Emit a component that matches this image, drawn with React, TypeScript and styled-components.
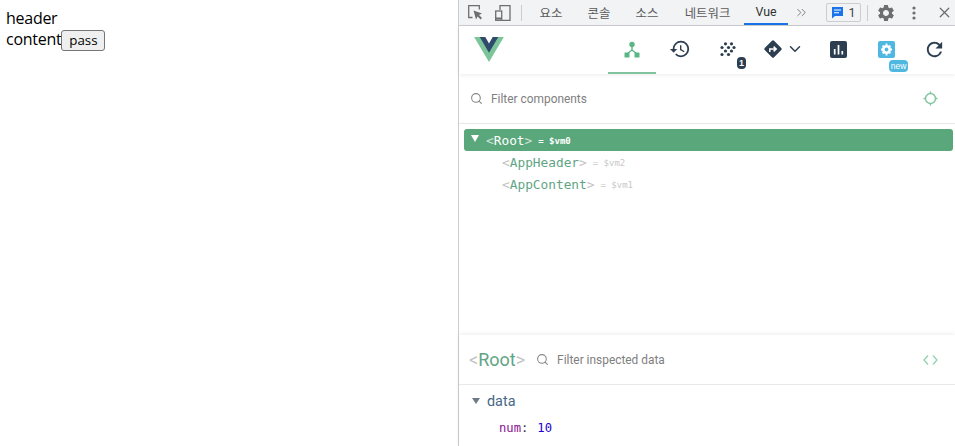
import styled, { createGlobalStyle } from "styled-components";
import { Search, ChevronDown, ChevronsRight, X } from "lucide-react";
import { MdHistory, MdRefresh, MdSettings } from "react-icons/md";

const GlobalStyle = createGlobalStyle`
  html, body {
    margin: 0;
    padding: 0;
    height: 100%;
    overflow: hidden;
    background: #fff;
  }
  #root { height: 100%; }
`;

const Page = styled.div`
  display: flex;
  width: 955px;
  height: 446px;
  font-family: "Liberation Sans", Arial, sans-serif;
`;

const Preview = styled.div`
  width: 458px;
  flex: none;
  padding: 8px 6px 0;
  box-sizing: border-box;
  font-family: "Open Sans", "Liberation Sans", sans-serif;
  font-size: 16px;
  letter-spacing: -0.27px;
  line-height: 21px;
  color: #000;
`;

const PassButton = styled.button`
  font-family: "Open Sans", "Liberation Sans", Arial, sans-serif;
  font-size: 13.33px;
  letter-spacing: 0;
  height: 21px;
  width: 44px;
  padding: 0;
  color: #000;
  background: #efefef;
  border: 1px solid #767676;
  border-radius: 3px;
  vertical-align: baseline;
`;

const Devtools = styled.div`
  flex: 1;
  display: flex;
  flex-direction: column;
  border-left: 1px solid #cbcdd1;
  min-width: 0;
`;

const TabBar = styled.div`
  height: 26px;
  flex: none;
  box-sizing: border-box;
  display: flex;
  align-items: center;
  background: #f1f3f4;
  border-bottom: 1px solid #cbcdd1;
  color: #5a5a5a;
`;

const BarIcon = styled.span<{ $w: number; $ml?: number }>`
  width: ${(p) => p.$w}px;
  margin-left: ${(p) => p.$ml ?? 0}px;
  flex: none;
  display: flex;
  align-items: center;
  justify-content: center;
  color: #6e6e6e;
`;

const Divider = styled.span<{ $ml: number; $mr: number }>`
  width: 1px;
  height: 16px;
  flex: none;
  background: #cbcdd1;
  margin: 0 ${(p) => p.$mr}px 0 ${(p) => p.$ml}px;
`;

const Tab = styled.span<{ $w: number; $active?: boolean }>`
  width: ${(p) => p.$w}px;
  height: 25px;
  flex: none;
  box-sizing: border-box;
  display: flex;
  align-items: center;
  justify-content: center;
  font-family: Roboto, "Noto Sans CJK KR", sans-serif;
  font-size: 12.4px;
  color: ${(p) => (p.$active ? "#333" : "#5a5a5a")};
  border-bottom: ${(p) => (p.$active ? "2px solid #1a73e8" : "none")};
`;

const IssueBadge = styled.span`
  width: 35px;
  height: 19px;
  margin-left: 12px;
  flex: none;
  box-sizing: border-box;
  display: flex;
  align-items: center;
  justify-content: center;
  gap: 4px;
  border: 1px solid #cbcdd1;
  border-radius: 2px;
  font-family: Roboto, sans-serif;
  font-size: 12.5px;
  color: #444;
`;

const Toolbar = styled.div`
  height: 48px;
  flex: none;
  display: flex;
  align-items: center;
  padding-left: 149px;
  box-shadow: 0 1px 4px rgba(0, 0, 0, 0.08);
  position: relative;
`;

const VueMark = styled.svg`
  position: absolute;
  left: 15px;
  top: 10px;
`;

const ToolButton = styled.span<{ $w: number; $active?: boolean }>`
  width: ${(p) => p.$w}px;
  height: 48px;
  flex: none;
  box-sizing: border-box;
  display: flex;
  align-items: center;
  justify-content: center;
  gap: 3px;
  color: #2c3e50;
  position: relative;
  border-bottom: 2px solid ${(p) => (p.$active ? "#7fc49f" : "transparent")};
`;

const CountBadge = styled.span`
  position: absolute;
  left: 33px;
  top: 31px;
  width: 9px;
  height: 12px;
  border-radius: 4px;
  background: #2c3e50;
  color: #fff;
  font-size: 9px;
  font-weight: 700;
  line-height: 12px;
  text-align: center;
`;

const NewBadge = styled.span`
  position: absolute;
  left: 27px;
  top: 34px;
  width: 19px;
  height: 12px;
  border-radius: 4px;
  background: #4fb8e0;
  color: #fff;
  font-size: 8.5px;
  line-height: 13px;
  text-align: center;
`;

const FilterRow = styled.div`
  height: 50px;
  flex: none;
  box-sizing: border-box;
  display: flex;
  align-items: center;
  padding: 0 17px 0 11px;
  gap: 8px;
  border-bottom: 1px solid #e8e8e8;
`;

const FilterText = styled.span<{ $ml?: number }>`
  font-family: Roboto, "Liberation Sans", sans-serif;
  font-size: 11.9px;
  color: #808080;
  flex: 1;
  margin-left: ${(p) => p.$ml ?? 0}px;
`;

const Tree = styled.div`
  flex: 1;
  padding: 5px 2px 0 5px;
  font-family: "DejaVu Sans Mono", "Liberation Mono", monospace;
`;

const TreeRow = styled.div<{ $selected?: boolean }>`
  height: 22px;
  display: flex;
  align-items: center;
  box-sizing: border-box;
  padding-left: ${(p) => (p.$selected ? 7 : 38)}px;
  border-radius: 3px;
  background: ${(p) => (p.$selected ? "#5ba77c" : "transparent")};
  font-size: 12.8px;
`;

const Caret = styled.span`
  width: 0;
  height: 0;
  border-left: 4.5px solid transparent;
  border-right: 4.5px solid transparent;
  border-top: 7px solid #fff;
  margin-right: 7px;
  margin-top: -3px;
`;

const Angle = styled.span<{ $selected?: boolean }>`
  color: ${(p) => (p.$selected ? "#c9e4d4" : "#c4c4c4")};
`;

const TagName = styled.span<{ $selected?: boolean }>`
  color: ${(p) => (p.$selected ? "#fff" : "#5fa584")};
`;

const VmRef = styled.span<{ $selected?: boolean }>`
  font-size: 9px;
  margin-left: 6px;
  padding-top: 2px;
  color: ${(p) => (p.$selected ? "#fff" : "#c8c8c8")};
  font-weight: ${(p) => (p.$selected ? 700 : 400)};
`;

const Inspector = styled.div`
  flex: none;
  height: 111px;
  box-shadow: 0 -1px 4px rgba(0, 0, 0, 0.08);
`;

const InspectorHead = styled.div`
  height: 50px;
  box-sizing: border-box;
  display: flex;
  align-items: center;
  padding: 0 17px 0 10px;
  border-bottom: 1px solid #e8e8e8;
`;

const HeadTitle = styled.span`
  font-family: Roboto, "Liberation Sans", sans-serif;
  font-size: 18px;
  color: #5fa584;
  margin-right: 11px;

  i {
    font-style: normal;
    color: #c4c4c4;
  }
`;

const Section = styled.div`
  padding: 7px 0 0 13px;
`;

const SectionTitle = styled.div`
  display: flex;
  align-items: center;
  height: 18px;
  font-family: Roboto, "Liberation Sans", sans-serif;
  font-size: 14.4px;
  color: #486887;

  &::before {
    content: "";
    width: 0;
    height: 0;
    border-left: 4px solid transparent;
    border-right: 4px solid transparent;
    border-top: 6px solid #6c7a89;
    margin-right: 7px;
  }
`;

const DataRow = styled.div`
  margin: 11px 0 0 27px;
  font-family: "DejaVu Sans Mono", "Liberation Mono", monospace;
  font-size: 12.2px;
  color: #333;

  b {
    font-weight: 400;
    color: #881391;
  }

  em {
    font-style: normal;
    color: #1c00cf;
    margin-left: 9px;
  }
`;

function VueLogo() {
  return (
    <VueMark width="30" height="26" viewBox="0 0 32 28">
      <polygon points="0,1 8,1 16,15 24,1 32,1 16,28" fill="#7cc49a" />
      <polygon points="6,1 12,1 16,8 20,1 26,1 16,18" fill="#2f4a6b" />
    </VueMark>
  );
}

function InspectIcon() {
  return (
    <svg width="15" height="15" viewBox="0 0 15 15" fill="none">
      <path d="M4.5 12.5H0.7V0.7h10.6v3.8" stroke="#6e6e6e" strokeWidth="1.3" />
      <path d="M5.5 5.5l8.5 3-3 1.6 3 3-1.4 1.5-3-3-1.6 3z" fill="#6e6e6e" />
    </svg>
  );
}

function DeviceIcon() {
  return (
    <svg width="16" height="16" viewBox="0 0 16 16" fill="none" stroke="#6e6e6e" strokeWidth="1.3">
      <path d="M5 5V0.7h10v14.6H7" />
      <rect x="0.7" y="6" width="6" height="9.3" />
      <path d="M0.7 13.5h6" strokeWidth="2" />
    </svg>
  );
}

function ChatIcon() {
  return (
    <svg width="13" height="13" viewBox="0 0 13 13">
      <path d="M1 1h11v9H4l-3 2.5z" fill="#1a73e8" />
      <path d="M3 4h7M3 6.8h5" stroke="#fff" strokeWidth="1.1" />
    </svg>
  );
}

function TreeIcon() {
  return (
    <svg width="16" height="17" viewBox="0 0 16 17" fill="#5bb585">
      <circle cx="8" cy="3.5" r="2.7" />
      <rect x="0.5" y="11.5" width="5" height="5" rx="0.6" />
      <rect x="10.5" y="11.5" width="5" height="5" rx="0.6" />
      <path d="M8 5v4L3 13M8 9l5 4" stroke="#5bb585" strokeWidth="1.4" fill="none" />
    </svg>
  );
}

const DOTS: [number, number][] = [
  [5.5, 1.8], [11.5, 1.8], [2, 5.5], [8.5, 5.5], [14, 5.5], [5.5, 9], [11.5, 9], [2, 12.5], [8.5, 12.5],
];

function EventsIcon() {
  return (
    <svg width="16" height="15" viewBox="0 0 16 15" fill="#2c3e50">
      {DOTS.map(([x, y]) => (
        <circle key={`${x}-${y}`} cx={x} cy={y} r="1.6" />
      ))}
    </svg>
  );
}

function RouteIcon() {
  return (
    <svg width="20" height="20" viewBox="0 0 20 20">
      <rect x="3.4" y="3.4" width="13.2" height="13.2" rx="1.5" transform="rotate(45 10 10)" fill="#2c3e50" />
      <path d="M6.8 13v-3h5.4M10.6 7.6l2.6 2.4-2.6 2.4" stroke="#fff" strokeWidth="1.5" fill="none" />
    </svg>
  );
}

function ChartIcon() {
  return (
    <svg width="17" height="17" viewBox="0 0 17 17">
      <rect width="17" height="17" rx="2" fill="#2c3e50" />
      <path d="M4.7 8v5.5M8.5 4v9.5M12.3 10v3.5" stroke="#fff" strokeWidth="1.7" />
    </svg>
  );
}

function SettingsTile() {
  return (
    <svg width="17" height="17" viewBox="0 0 17 17">
      <rect width="17" height="17" rx="2" fill="#4fb8e0" />
      <circle cx="8.5" cy="8.5" r="3.2" fill="none" stroke="#fff" strokeWidth="2.6" />
      <path d="M8.5 2.5v2.5M8.5 12v2.5M3 8.5h2.5M11.5 8.5H14M4.6 4.6L6 6M11 11l1.4 1.4M4.6 12.4L6 11M11 6l1.4-1.4" stroke="#fff" strokeWidth="1.8" />
    </svg>
  );
}

function Crosshair() {
  return (
    <svg width="15" height="15" viewBox="0 0 15 15" fill="none" stroke="#7fc49f">
      <circle cx="7.5" cy="7.5" r="5" strokeWidth="1.4" />
      <path d="M7.5 0.5v2.5M7.5 12v2.5M0.5 7.5H3M12 7.5h2.5" strokeWidth="1.4" />
    </svg>
  );
}

function CodeIcon() {
  return (
    <svg width="15" height="12" viewBox="0 0 15 12" fill="none" stroke="#8fd4ae" strokeWidth="1.3">
      <path d="M5 1.5L1 6l4 4.5M10 1.5L14 6l-4 4.5" />
    </svg>
  );
}

function KebabIcon() {
  return (
    <svg width="4" height="14" viewBox="0 0 4 14" fill="#6e6e6e">
      <circle cx="2" cy="2" r="1.6" />
      <circle cx="2" cy="7" r="1.6" />
      <circle cx="2" cy="12" r="1.6" />
    </svg>
  );
}

export default function App() {
  return (
    <Page>
      <GlobalStyle />
      <Preview>
        <div>header</div>
        <div>
          content<PassButton>pass</PassButton>
        </div>
      </Preview>
      <Devtools>
        <TabBar>
          <BarIcon $w={15} $ml={9}><InspectIcon /></BarIcon>
          <BarIcon $w={16} $ml={12}><DeviceIcon /></BarIcon>
          <Divider $ml={10} $mr={5} />
          <Tab $w={48}>요소</Tab>
          <Tab $w={48}>콘솔</Tab>
          <Tab $w={48}>소스</Tab>
          <Tab $w={73}>네트워크</Tab>
          <Tab $w={44} $active>Vue</Tab>
          <BarIcon $w={26}><ChevronsRight size={15} strokeWidth={1.4} /></BarIcon>
          <IssueBadge><ChatIcon />1</IssueBadge>
          <Divider $ml={6} $mr={7} />
          <BarIcon $w={22}><MdSettings size={20} /></BarIcon>
          <BarIcon $w={22} $ml={6}><KebabIcon /></BarIcon>
          <BarIcon $w={22} $ml={8}><X size={17} strokeWidth={1.8} /></BarIcon>
        </TabBar>
        <Toolbar>
          <VueLogo />
          <ToolButton $w={48} $active><TreeIcon /></ToolButton>
          <ToolButton $w={48}><MdHistory size={22} /></ToolButton>
          <ToolButton $w={48}>
            <EventsIcon />
            <CountBadge>1</CountBadge>
          </ToolButton>
          <ToolButton $w={62}>
            <RouteIcon />
            <ChevronDown size={18} strokeWidth={2} />
          </ToolButton>
          <ToolButton $w={48}><ChartIcon /></ToolButton>
          <ToolButton $w={48}>
            <SettingsTile />
            <NewBadge>new</NewBadge>
          </ToolButton>
          <ToolButton $w={48}><MdRefresh size={23} /></ToolButton>
        </Toolbar>
        <FilterRow>
          <Search size={13} color="#888" strokeWidth={2} />
          <FilterText>Filter components</FilterText>
          <Crosshair />
        </FilterRow>
        <Tree>
          <TreeRow $selected>
            <Caret />
            <Angle $selected>&lt;</Angle>
            <TagName $selected>Root</TagName>
            <Angle $selected>&gt;</Angle>
            <VmRef $selected>= $vm0</VmRef>
          </TreeRow>
          <TreeRow>
            <Angle>&lt;</Angle>
            <TagName>AppHeader</TagName>
            <Angle>&gt;</Angle>
            <VmRef>= $vm2</VmRef>
          </TreeRow>
          <TreeRow>
            <Angle>&lt;</Angle>
            <TagName>AppContent</TagName>
            <Angle>&gt;</Angle>
            <VmRef>= $vm1</VmRef>
          </TreeRow>
        </Tree>
        <Inspector>
          <InspectorHead>
            <HeadTitle><i>&lt;</i>Root<i>&gt;</i></HeadTitle>
            <Search size={13} color="#888" strokeWidth={2} />
            <FilterText $ml={8}>Filter inspected data</FilterText>
            <CodeIcon />
          </InspectorHead>
          <Section>
            <SectionTitle>data</SectionTitle>
            <DataRow><b>num</b>:<em>10</em></DataRow>
          </Section>
        </Inspector>
      </Devtools>
    </Page>
  );
}
